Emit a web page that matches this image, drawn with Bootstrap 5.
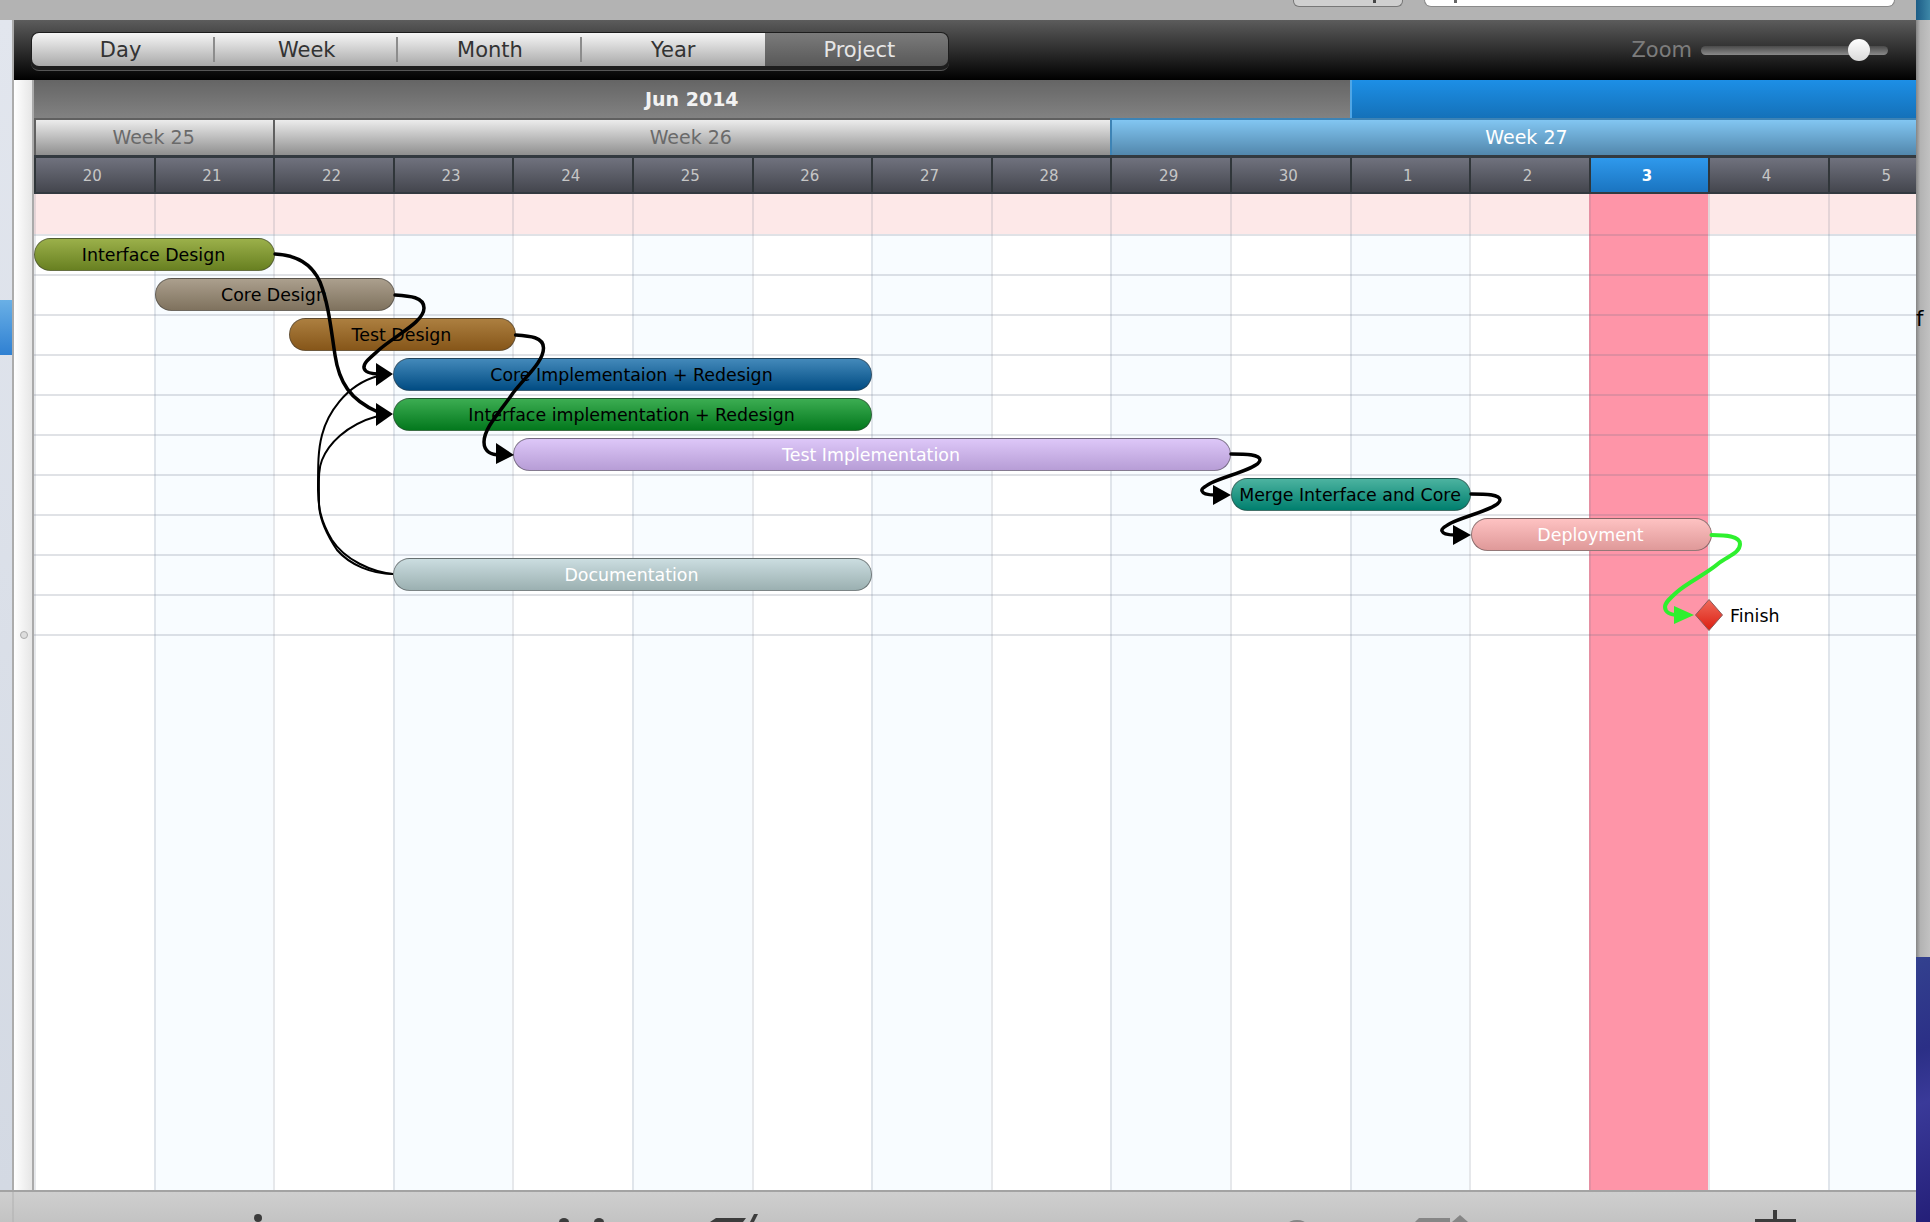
<!DOCTYPE html>
<html lang="en">
<head>
  <meta charset="UTF-8">
  <title>Project Gantt</title>
  <link rel="stylesheet" href="https://cdn.jsdelivr.net/npm/bootstrap@5.3.3/dist/css/bootstrap.min.css">
  <style>
    html, body { height: 100%; }
    body {
      width: 1930px;
      height: 1222px;
      overflow: hidden;
      font-family: "DejaVu Sans", sans-serif;
      background: #b5b5b5;
    }
    .main-side { width: 1916px; min-width: 0; }
    .top-strip { height: 20px; background: #b3b3b3; padding-right: 21px; }
    .mini-btn { width: 110px; height: 7px; background: #cfcfcf; border: 1px solid #777; border-top: 0; border-radius: 0 0 6px 6px; margin-right: 21px; }
    .mini-btn::after { content: ""; display: block; width: 3px; height: 3px; margin-left: 79px; background: #444; }
    .mini-search { width: 471px; height: 7px; background: #fff; border: 1px solid #8a8a8a; border-top: 0; border-radius: 0 0 9px 9px; }
    .mini-search::after { content: ""; display: block; width: 3px; height: 3px; margin-left: 29px; background: #666; }
    .middle-part { height: 1170px; }
    .left-rail { width: 14px; background: linear-gradient(#e2e6ee, #d3d9e3); border-right: 2px solid #acacac; padding-top: 280px; }
    .rail-blue { height: 55px; background: linear-gradient(#6ab0e6, #2f80d2); }
    .window-part { min-width: 0; }

    .tool-bar { height: 60px; background: linear-gradient(#5c5c5c, #000); padding: 0 28px 0 17px; }
    .seg-group { --bs-border-width: 0px; margin-top: 3px; padding: 1px 1px 4px; background: #1d1d1d; border-radius: 8px; border-bottom: 1px solid #555; }
    .seg-group .seg-btn {
      width: 183.2px;
      height: 33px;
      padding: 2px 0 0;
      border: 0;
      border-radius: 0;
      font-size: 21px;
      line-height: 31px;
      color: #333;
      background: linear-gradient(#f6f6f6, #a9a9a9);
      position: relative;
    }
    .seg-group .seg-btn:first-child { border-radius: 7px 0 0 7px; padding-right: 6px; }
    .seg-group .seg-btn:last-child { border-radius: 0 7px 7px 0; padding-left: 6px; }
    .seg-btn:not(:last-child):not(.seg-pre)::after {
      content: "";
      position: absolute;
      right: 0;
      top: 4px;
      bottom: 4px;
      width: 2px;
      background: #8c8c8c;
    }
    .seg-group .btn.seg-on, .seg-group .btn.seg-on:hover { color: #e6e6e6; background: linear-gradient(#7b7b7b, #585858); }
    .zoom-label { padding-top: 1px; font-size: 21px; color: #7c7c7c; margin-right: 9px; }
    .zoom-range { width: 187px; height: 22px; }
    .zoom-range::-webkit-slider-runnable-track { height: 9px; border-radius: 5px; background: linear-gradient(#4a4a4a, #8a8a8a); }
    .zoom-range::-webkit-slider-thumb { width: 22px; height: 22px; margin-top: -6.5px; border-radius: 50%; background: linear-gradient(#fff, #d9d9d9); box-shadow: none; }

    .gutter-side { width: 20px; background: linear-gradient(90deg, #fff, #e6e6e6); border-right: 2px solid #aaa; padding-top: 551px; }
    .gutter-dot { width: 8px; height: 8px; margin-left: 6px; border: 1px solid #aaa; border-radius: 50%; background: #ddd; }
    .time-part { min-width: 0; overflow: hidden; }

    .time-grid { display: grid; grid-template-columns: repeat(16, 119.6px); }
    .month-head { height: 38px; font-size: 19px; font-weight: 700; color: #f2f2f2; background: linear-gradient(#656565, #828282); }
    .month-now { background: linear-gradient(#1d8fe6, #1471b9); border-left: 2px solid #4fa6e6; }
    .month-a { grid-column: span 11; }
    .month-b { grid-column: span 5; }
    .week-head { height: 37px; font-size: 19px; color: #6a6a6a; background: linear-gradient(#ececec, #8f8f8f); border: 2px solid #606060; border-width: 2px 0 0 2px; }
    .week-a { grid-column: span 2; padding-right: 2px; }
    .week-b { grid-column: span 7; padding-right: 4px; }
    .week-now { padding-right: 7px; color: #fff; background: linear-gradient(#82c6f2, #5287ac); border-color: #3d83b5; }
    .day-line { background: #333a40; padding: 3px 0 2px; }
    .day-head { height: 34px; padding: 2px 5px 0 0; font-size: 15px; color: #c6c6c6; background: linear-gradient(#70727e, #44464e); border-left: 2px solid #30363a; }
    .day-now { color: #fff; font-weight: 700; background: linear-gradient(#2f99ec, #1a74c0); }

    .chart-area { position: relative; flex-grow: 1; background: #fff; }
    .pink-band { height: 40px; background: #fde8e8; }
    .col-layer { position: absolute; inset: 0; }
    .col-cell { border-left: 2px solid rgba(100, 110, 130, .16); }
    .col-tint { background: linear-gradient(transparent 40px, #f8fcff 40px); }
    .col-today { background: #fe95a8; }
    .task-row { position: relative; z-index: 1; height: 40px; border-top: 2px solid rgba(100, 110, 130, .2); }
    .task-bar {
      position: absolute;
      top: 2px;
      height: 33px;
      padding: 2px 2px 0 0;
      font-size: 17.4px;
      color: #000;
      border: 1.5px solid rgba(60, 60, 60, .55);
    }
    .bar-olive { background: linear-gradient(#9bb04a, #688021); }
    .bar-taupe { background: linear-gradient(#ab9f8d, #7f725e); }
    .bar-brown { background: linear-gradient(#ac7f40, #865619); }
    .bar-blue { background: linear-gradient(#4389ba, #014c83); }
    .bar-green { background: linear-gradient(#3cad52, #03781d); }
    .bar-purple { background: linear-gradient(#ddc7f8, #b79dd6); color: #fff; }
    .bar-teal { background: linear-gradient(#4cb3a0, #007f6e); }
    .bar-rose { background: linear-gradient(#fec2c2, #df9999); color: #fff; }
    .bar-slate { background: linear-gradient(#cbdde0, #9bb0b1); color: #fff; }
    .mile-stone { position: absolute; left: 1661px; top: 3px; height: 32px; font-size: 17.4px; color: #000; gap: 7px; }
    .mile-stone span { padding-top: 2px; }
    .link-layer { position: absolute; inset: 0; z-index: 2; width: 100%; height: 100%; pointer-events: none; }

    .bottom-bar { height: 32px; background: linear-gradient(#cfcfcf, #c3c3c3); border-top: 2px solid #a3a3a3; }
    .bottom-bar svg { display: block; }

    .right-rail { width: 14px; }
    .rail-wall-top { height: 20px; background: linear-gradient(90deg, #1c5c86, #3e88a8); }
    .rail-pane { flex-grow: 1; background: linear-gradient(90deg, #858585, #b3b3b3 30%, #c2c2c2); padding-top: 286px; font-size: 21px; line-height: 26px; color: #000; }
    .rail-wall { height: 265px; background: linear-gradient(160deg, #33418f, #2b2f86 35%, #3a3a99 55%, #241f78); }
  </style>
</head>
<body class="d-flex">
  <div class="main-side d-flex flex-column flex-shrink-0">
    <div class="top-strip d-flex justify-content-end align-items-start">
      <div class="mini-btn"></div>
      <div class="mini-search"></div>
    </div>

    <div class="middle-part d-flex">
      <div class="left-rail flex-shrink-0"><div class="rail-blue"></div></div>

      <div class="window-part d-flex flex-column flex-grow-1">
        <div class="tool-bar d-flex justify-content-between align-items-center">
          <div class="btn-group seg-group" role="group">
            <button type="button" class="btn seg-btn">Day</button>
            <button type="button" class="btn seg-btn">Week</button>
            <button type="button" class="btn seg-btn">Month</button>
            <button type="button" class="btn seg-btn seg-pre">Year</button>
            <button type="button" class="btn seg-btn seg-on">Project</button>
          </div>
          <div class="d-flex align-items-center">
            <span class="zoom-label">Zoom</span>
            <input type="range" class="form-range zoom-range" min="0" max="100" value="89" aria-label="Zoom">
          </div>
        </div>

        <div class="d-flex flex-grow-1">
          <div class="gutter-side flex-shrink-0"><div class="gutter-dot"></div></div>

          <div class="time-part d-flex flex-column flex-grow-1">
            <div class="time-grid">
              <div class="month-head month-a d-flex align-items-center justify-content-center">Jun 2014</div>
              <div class="month-head month-now month-b"></div>
            </div>
            <div class="time-grid">
              <div class="week-head week-a d-flex align-items-center justify-content-center">Week 25</div>
              <div class="week-head week-b d-flex align-items-center justify-content-center">Week 26</div>
              <div class="week-head week-b week-now d-flex align-items-center justify-content-center">Week 27</div>
            </div>
            <div class="time-grid day-line">
              <div class="day-head d-flex align-items-center justify-content-center">20</div>
              <div class="day-head d-flex align-items-center justify-content-center">21</div>
              <div class="day-head d-flex align-items-center justify-content-center">22</div>
              <div class="day-head d-flex align-items-center justify-content-center">23</div>
              <div class="day-head d-flex align-items-center justify-content-center">24</div>
              <div class="day-head d-flex align-items-center justify-content-center">25</div>
              <div class="day-head d-flex align-items-center justify-content-center">26</div>
              <div class="day-head d-flex align-items-center justify-content-center">27</div>
              <div class="day-head d-flex align-items-center justify-content-center">28</div>
              <div class="day-head d-flex align-items-center justify-content-center">29</div>
              <div class="day-head d-flex align-items-center justify-content-center">30</div>
              <div class="day-head d-flex align-items-center justify-content-center">1</div>
              <div class="day-head d-flex align-items-center justify-content-center">2</div>
              <div class="day-head day-now d-flex align-items-center justify-content-center">3</div>
              <div class="day-head d-flex align-items-center justify-content-center">4</div>
              <div class="day-head d-flex align-items-center justify-content-center">5</div>
            </div>

            <div class="chart-area">
              <div class="pink-band"></div>
              <div class="col-layer time-grid">
                <div class="col-cell"></div>
                <div class="col-cell col-tint"></div>
                <div class="col-cell"></div>
                <div class="col-cell col-tint"></div>
                <div class="col-cell"></div>
                <div class="col-cell col-tint"></div>
                <div class="col-cell"></div>
                <div class="col-cell col-tint"></div>
                <div class="col-cell"></div>
                <div class="col-cell col-tint"></div>
                <div class="col-cell"></div>
                <div class="col-cell col-tint"></div>
                <div class="col-cell"></div>
                <div class="col-cell col-today"></div>
                <div class="col-cell"></div>
                <div class="col-cell col-tint"></div>
              </div>

              <div class="task-row">
                <div class="task-bar bar-olive rounded-pill d-flex align-items-center justify-content-center" style="left: 0; width: 241px;">Interface Design</div>
              </div>
              <div class="task-row">
                <div class="task-bar bar-taupe rounded-pill d-flex align-items-center justify-content-center" style="left: 121px; width: 240px;">Core Design</div>
              </div>
              <div class="task-row">
                <div class="task-bar bar-brown rounded-pill d-flex align-items-center justify-content-center" style="left: 255px; width: 227px;">Test Design</div>
              </div>
              <div class="task-row">
                <div class="task-bar bar-blue rounded-pill d-flex align-items-center justify-content-center" style="left: 359px; width: 479px;">Core Implementaion + Redesign</div>
              </div>
              <div class="task-row">
                <div class="task-bar bar-green rounded-pill d-flex align-items-center justify-content-center" style="left: 359px; width: 479px;">Interface implementation + Redesign</div>
              </div>
              <div class="task-row">
                <div class="task-bar bar-purple rounded-pill d-flex align-items-center justify-content-center" style="left: 479px; width: 718px;">Test Implementation</div>
              </div>
              <div class="task-row">
                <div class="task-bar bar-teal rounded-pill d-flex align-items-center justify-content-center" style="left: 1197px; width: 240px;">Merge Interface and Core</div>
              </div>
              <div class="task-row">
                <div class="task-bar bar-rose rounded-pill d-flex align-items-center justify-content-center" style="left: 1437px; width: 241px;">Deployment</div>
              </div>
              <div class="task-row">
                <div class="task-bar bar-slate rounded-pill d-flex align-items-center justify-content-center" style="left: 359px; width: 479px;">Documentation</div>
              </div>
              <div class="task-row">
                <div class="mile-stone d-flex align-items-center">
                  <svg width="28" height="32" viewBox="0 0 28 32">
                    <defs>
                      <linearGradient id="diamondFill" x1="0" y1="0" x2="0" y2="1">
                        <stop offset="0" stop-color="#ef6a5a"/>
                        <stop offset="1" stop-color="#dc1e12"/>
                      </linearGradient>
                    </defs>
                    <polygon points="14,0.5 27.5,16 14,31.5 0.5,16" fill="url(#diamondFill)" stroke="#8b5a5a" stroke-width="1"/>
                  </svg>
                  <span>Finish</span>
                </div>
              </div>
              <div class="task-row"></div>

              <!-- dependency links, viewBox is in page coordinates -->
              <svg class="link-layer" viewBox="34 194 1882 996" fill="none">
                <g stroke="#000" stroke-width="2">
                  <path d="M393 574 C372 572 345 560 332 540 C320 520 318 505 318 490 C318 465 318 450 322 435 C327 415 345 385 378 376"/>
                  <path d="M393 574 C372 574 350 565 337 550 C325 532 319 515 319 503 C319 480 318 470 322 460 C328 445 345 425 378 416"/>
                </g>
                <g stroke="#000" stroke-width="3.5" stroke-linecap="round">
                  <path d="M275 254 C296 255 312 264 320 282 C329 305 331 330 335 355 C339 382 350 400 378 412"/>
                  <path d="M395 295 C410 296 424 297 424 308 C424 322 396 335 380 349 C370 358 363 363 364 368 C365 373 372 374 380 374"/>
                  <path d="M515.6 335 C530 336 543.5 337 543.5 348 C543.5 362 525 377 513 393 C500 412 484 428 484 442 C484 452 492 455 500 455"/>
                  <path d="M1231 454 C1245 454 1260 454 1260 460 C1260 468 1225 476 1211 483 C1204 487 1201 489 1202 491 C1203 494 1208 495 1215 495"/>
                  <path transform="translate(240 40)" d="M1231 454 C1245 454 1260 454 1260 460 C1260 468 1225 476 1211 483 C1204 487 1201 489 1202 491 C1203 494 1208 495 1215 495"/>
                </g>
                <g fill="#000">
                  <polygon points="393,374 376,363 376,386"/>
                  <polygon points="393,414 376,403 376,426"/>
                  <polygon points="514,455 496,443 496,464"/>
                  <polygon points="1231,495 1213,485 1213,505"/>
                  <polygon points="1471,535 1453,525 1453,545"/>
                </g>
                <path d="M1711.5 535 C1725 535 1740 536 1740 544 C1740 553 1728 556 1719 563 C1705 575 1688 582 1677 592 C1669 599 1665 603 1665 607 C1665 612 1670 615 1678 615" stroke="#2ef02e" stroke-width="4" stroke-linecap="round"/>
                <polygon points="1694,615 1674,606 1674,624" fill="#2ef02e"/>
              </svg>
            </div>
          </div>
        </div>
      </div>
    </div>

    <div class="bottom-bar">
      <!-- tops of the dock icons, cut off by the screen edge -->
      <svg width="1916" height="30" viewBox="0 1192 1916 30">
        <line x1="13" y1="1192" x2="13" y2="1222" stroke="#b0b0b0"/>
        <g fill="#3c3c3c">
          <ellipse cx="258" cy="1218" rx="4" ry="4"/>
          <ellipse cx="564" cy="1222" rx="5" ry="4"/>
          <ellipse cx="599" cy="1222" rx="5" ry="4"/>
          <polygon points="716,1218 746,1218 743,1222 710,1222"/>
          <polygon points="754,1214 758,1214 754,1222 750,1222"/>
          <rect x="1773" y="1210" width="4" height="12"/>
          <rect x="1755" y="1219" width="41" height="3"/>
        </g>
        <g fill="#868686">
          <ellipse cx="1297" cy="1224" rx="9" ry="4"/>
          <polygon points="1419,1218 1450,1218 1450,1222 1415,1222"/>
          <polygon points="1460,1215 1468,1222 1452,1222"/>
        </g>
      </svg>
    </div>
  </div>

  <div class="right-rail d-flex flex-column flex-shrink-0">
    <div class="rail-wall-top"></div>
    <div class="rail-pane">f</div>
    <div class="rail-wall"></div>
  </div>

  <script src="https://cdn.jsdelivr.net/npm/bootstrap@5.3.3/dist/js/bootstrap.bundle.min.js"></script>
</body>
</html>
